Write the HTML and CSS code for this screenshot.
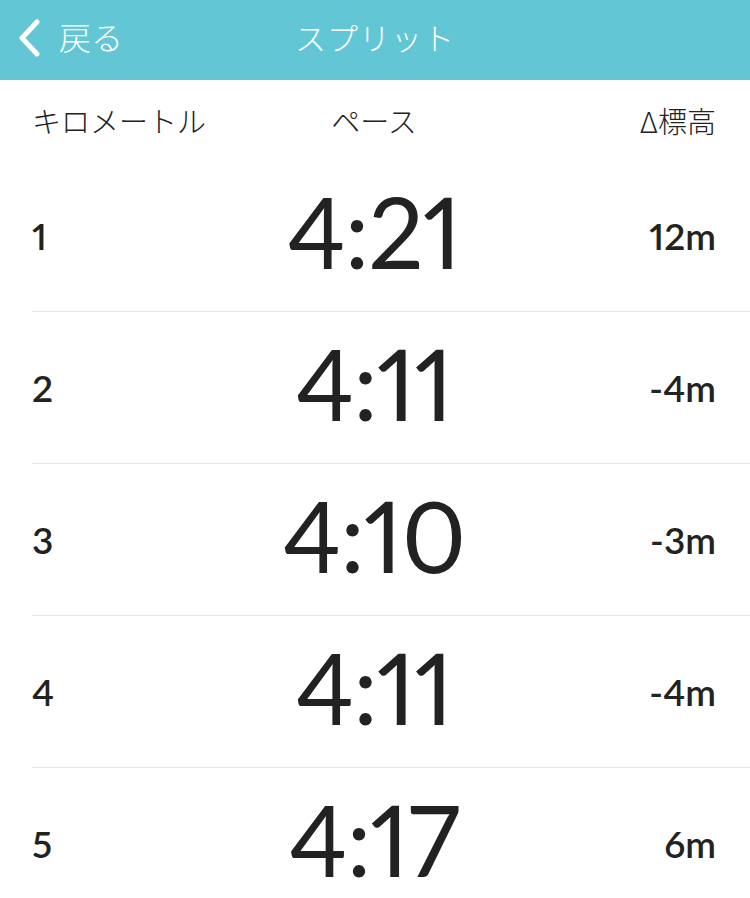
FILE: index.html
```html
<!DOCTYPE html>
<html lang="ja">
<head>
<meta charset="utf-8">
<title>スプリット</title>
<link rel="stylesheet" href="styles.css">
</head>
<body>
<div class="navbar">
	<div class="back">
		<svg class="chevron" width="26" height="38" viewBox="0 0 26 38"><path d="M21 3 L6 19 L21 35" fill="none" stroke="#fff" stroke-width="5" stroke-linecap="round" stroke-linejoin="round"/></svg>
		<span>戻る</span>
	</div>
	<div class="title">スプリット</div>
	<div class="spacer"></div>
</div>

<div class="list">
	<div class="row head">
		<span class="km">キロメートル</span>
		<span class="pace">ペース</span>
		<span class="elev">Δ標高</span>
	</div>
	<div class="row split">
		<span class="km">1</span>
		<span class="pace">4:21</span>
		<span class="elev">12m</span>
	</div>
	<div class="row split">
		<span class="km">2</span>
		<span class="pace">4:11</span>
		<span class="elev">-4m</span>
	</div>
	<div class="row split">
		<span class="km">3</span>
		<span class="pace">4:10</span>
		<span class="elev">-3m</span>
	</div>
	<div class="row split">
		<span class="km">4</span>
		<span class="pace">4:11</span>
		<span class="elev">-4m</span>
	</div>
	<div class="row split">
		<span class="km">5</span>
		<span class="pace">4:17</span>
		<span class="elev">6m</span>
	</div>
</div>
</body>
</html>
```

FILE: styles.css
```css
html, body {
	margin: 0;
	padding: 0;
	background: #fff;
}

body {
	width: 750px;
	height: 898px;
	overflow: hidden;
	font-family: "Lato", "Noto Sans CJK JP", sans-serif;
	color: #222;
}

/* top bar */
.navbar {
	height: 80px;
	box-sizing: border-box;
	padding-bottom: 8px;
	background: #63c6d4;
	color: #fff;
	display: grid;
	grid-template-columns: 1fr auto 1fr;
	align-items: center;
}

.back {
	display: flex;
	align-items: center;
	padding-left: 16px;
	font-family: "Noto Sans CJK JP", sans-serif;
	font-weight: 300;
	font-size: 32px;
}

.chevron { margin-right: 17px; margin-top: 4px; }

.title {
	font-family: "Noto Sans CJK JP", sans-serif;
	font-weight: 300;
	font-size: 31px;
	letter-spacing: 1px;
}

/* split table */
.row {
	display: grid;
	grid-template-columns: 1fr auto 1fr;
	align-items: center;
	margin-left: 32px;
	padding-right: 34px;
}

.row .elev { text-align: right; }

.head {
	height: 80px;
	font-family: "Noto Sans CJK JP", sans-serif;
	font-weight: 300;
	font-size: 29px;
}

.split {
	height: 151px;
	border-bottom: 1px solid #e6e6e6;
	font-size: 37px;
	font-weight: 600;
	font-variant-numeric: proportional-nums;
}

.split:last-child { border-bottom: none; }

.split .pace {
	font-size: 98px;
	font-weight: 400;
	line-height: 1;
	padding-bottom: 10px;
	letter-spacing: -1px;
}
```
